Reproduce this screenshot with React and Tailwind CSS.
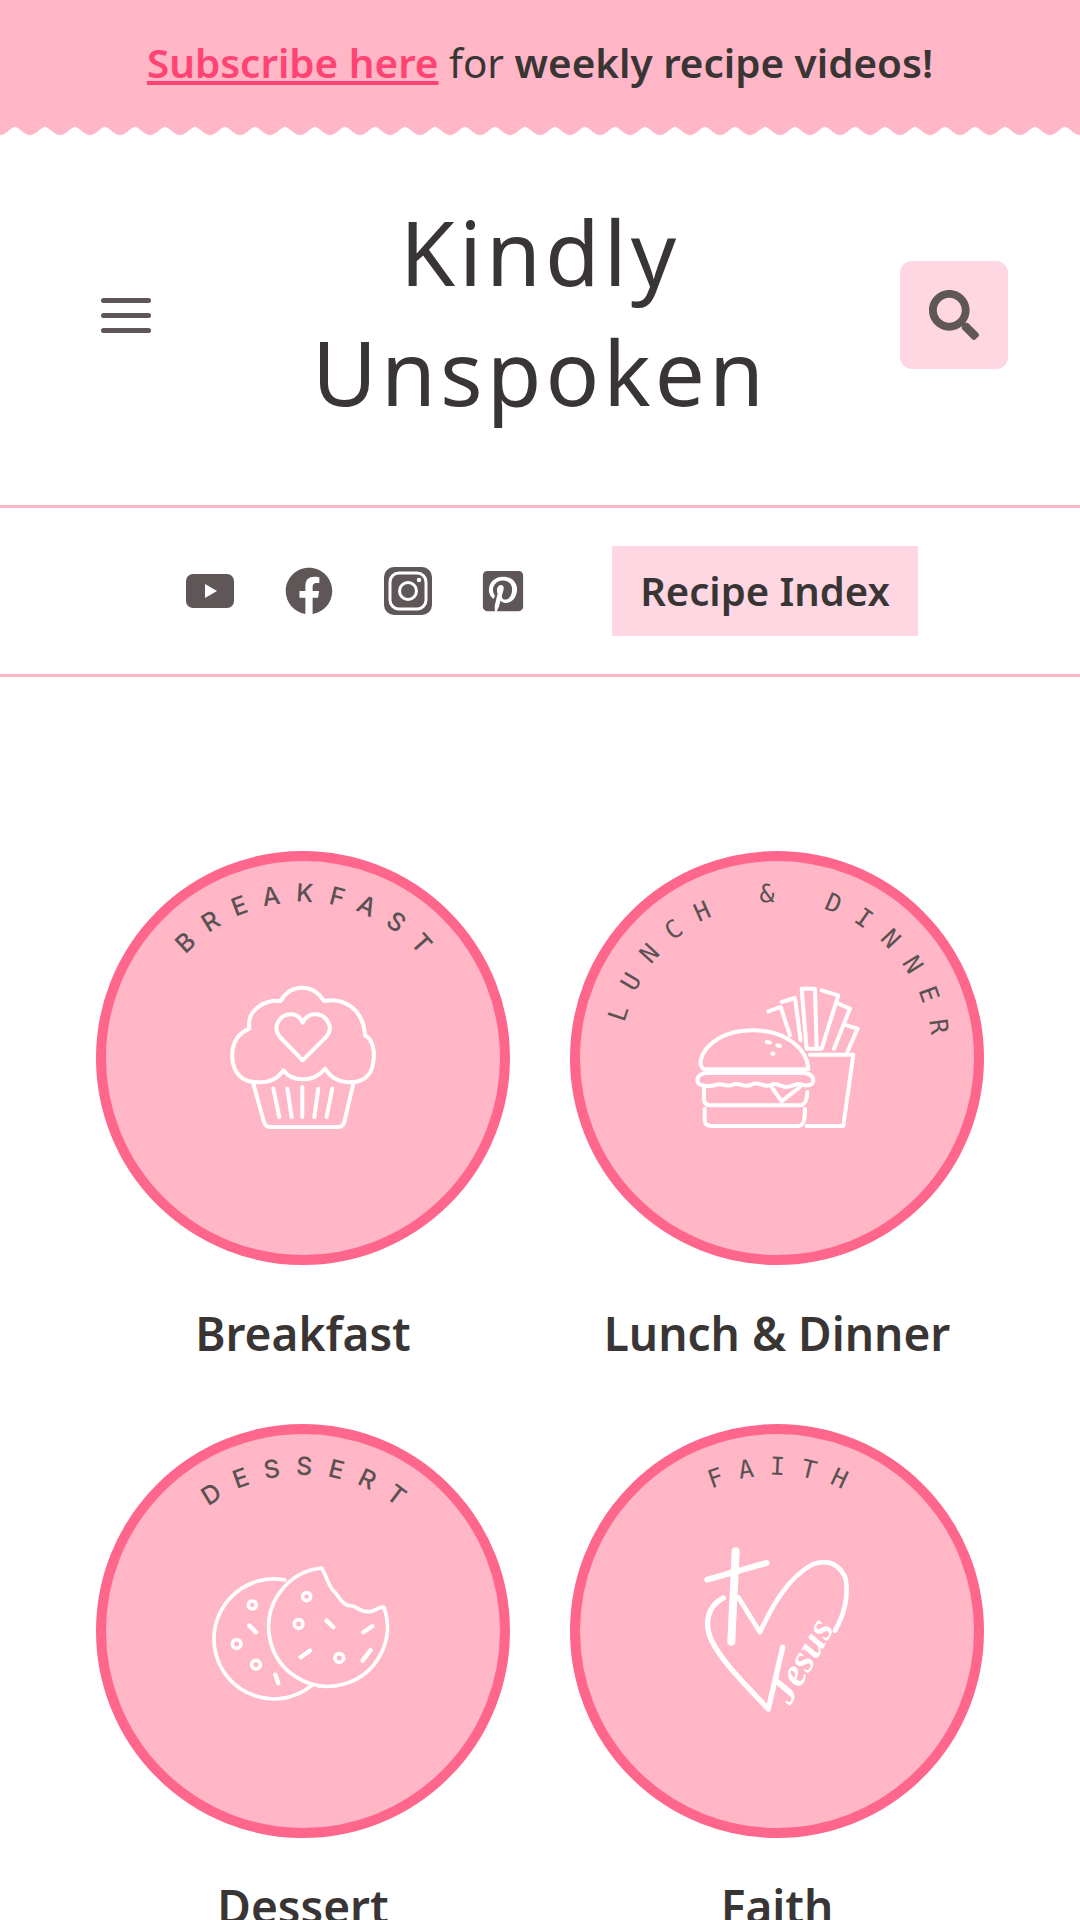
import { FaFacebook, FaPinterestSquare, FaSearch } from "react-icons/fa";

const font = { fontFamily: '"Noto Sans", "Open Sans", sans-serif' };

function Zigzag() {
  let d = "M0 0 L0 8";
  for (let x = 0; x < 1080; x += 30) {
    d += ` C${x + 6} 8 ${x + 11} 0 ${x + 15} 0 C${x + 19} 0 ${x + 24} 8 ${x + 30} 8`;
  }
  d += " L1080 0 Z";
  return (
    <svg className="block w-full h-[8px]" viewBox="0 0 1080 8" preserveAspectRatio="none">
      <path fill="#ffb6c7" d={d} />
    </svg>
  );
}

function Cupcake() {
  return (
    <g transform="translate(-16,-12.33) scale(0.3333)" fill="none" stroke="#fff" strokeWidth="12" strokeLinecap="round" strokeLinejoin="round">
      <path d="M520 730 C470 725 452 680 458 635 C462 600 485 580 508 570 C500 520 545 482 602 487 C620 455 645 447 667 447 C690 447 715 460 732 487 C790 475 850 510 855 590 C880 605 885 640 880 670 C875 710 850 730 815 730 C780 735 750 715 735 690 C715 715 690 722 668 722 C645 722 625 715 610 695 C595 720 565 735 520 730 Z" />
      <path d="M520 735 L552 850 C555 860 560 865 570 865 L775 865 C785 865 790 860 793 850 L820 735" />
      <path d="M580 750 L598 835 M622 750 L635 835 M667 745 L667 835 M715 750 L703 835 M757 750 L740 835" />
      <path d="M668 665 L600 595 C575 565 600 525 635 527 C650 528 662 538 668 552 C675 538 688 528 703 527 C738 525 765 565 738 595 Z" />
    </g>
  );
}

function Burger() {
  return (
    <g transform="translate(-10,-12.33) scale(0.3333)" fill="none" stroke="#fff" strokeWidth="12" strokeLinecap="round" strokeLinejoin="round">
      <path d="M625 518 L662 505 L690 590 M665 490 L705 478 L722 605 M725 450 L765 450 L770 630 L740 630 L725 450 M785 455 L835 470 L785 630 L770 630 M835 495 L870 510 L822 630 M860 560 L893 570 L862 640" />
      <path d="M750 648 L880 648 L850 862 L740 862" />
      <path d="M440 692 C425 692 420 680 422 665 C435 610 500 575 578 575 C650 575 720 605 742 670 L745 692 Z" />
      <path d="M440 703 L730 703 C750 703 760 715 760 725 C760 738 745 745 725 738 C710 730 700 745 680 745 C660 745 650 730 635 738 C615 750 600 730 580 735 C560 750 545 735 525 735 C505 750 490 732 470 738 C450 745 412 745 412 725 C412 712 425 703 440 703 Z" />
      <path d="M432 748 L432 785 C435 795 442 800 450 800 L725 800 C735 795 742 780 742 760" />
      <path d="M635 745 L665 788 L720 745" />
      <path d="M434 810 L434 845 C435 858 445 862 455 862 L715 862 C728 862 735 852 735 810" />
      <path d="M620 610 L630 612 M652 620 L660 622 M637 645 L640 645" />
    </g>
  );
}

function Cookies() {
  return (
    <g transform="translate(-16,-10) scale(0.3333)" fill="none" stroke="#fff" strokeWidth="11" strokeLinecap="round" strokeLinejoin="round">
      <path d="M615 498 A180 180 0 1 0 695 815" />
      <path d="M725 462 A178 178 0 1 0 912 580 C895 575 880 600 860 592 C840 595 825 570 805 575 C785 570 775 545 765 535 C745 520 745 495 725 462 Z" />
      <circle cx="517" cy="573" r="12" />
      <circle cx="470" cy="690" r="13" />
      <circle cx="528" cy="752" r="13" />
      <circle cx="680" cy="548" r="12" />
      <circle cx="656" cy="630" r="13" />
      <circle cx="778" cy="732" r="13" />
      <path d="M508 635 L528 655 M586 782 L595 808 M740 620 L760 640 M850 655 L877 637 M662 730 L690 710 M848 740 L872 708" strokeWidth="13" />
    </g>
  );
}

function Faith() {
  return (
    <g transform="translate(-10,-10) scale(0.3333)">
      <g fill="none" stroke="#fff" strokeLinecap="round" strokeLinejoin="round">
        <path d="M442 497 L620 447" strokeWidth="18" />
        <path d="M527 412 L514 683" strokeWidth="24" />
        <path d="M490 552 C445 575 430 625 455 680 C490 750 560 815 625 885 L668 700" strokeWidth="16" />
        <path d="M535 550 L600 655 C630 590 680 490 760 450 C820 430 860 470 860 520 C860 570 850 605 825 650" strokeWidth="14" />
      </g>
      <text transform="translate(690,875) rotate(-60)" fill="#fff" fontSize="118" fontStyle="italic" fontWeight="700" fontFamily='"Liberation Serif", serif'>Jesus</text>
    </g>
  );
}

function Badge({ id, label, mono, spacing, shift = 0, children }) {
  return (
    <div className="w-[414px] h-[414px] rounded-full bg-[#ffb6c7] border-[10px] border-[#ff668c] relative">
      <svg className="absolute left-[-10px] top-[-10px]" width="414" height="414" viewBox="0 0 414 414">
        <defs>
          <path id={id} d="M51 207 A156 156 0 0 1 363 207" />
        </defs>
        <text
          fill="#5a5252"
          fontSize="25"
          fontWeight="500"
          letterSpacing={spacing}
          fontFamily={mono ? '"DejaVu Sans Mono", monospace' : "Inter, sans-serif"}
        >
          <textPath href={`#${id}`} startOffset={245 + spacing / 2 + shift} textAnchor="middle">{label}</textPath>
        </text>
        {children}
      </svg>
    </div>
  );
}

const categories = [
  { id: "a", name: "Breakfast", label: "BREAKFAST", spacing: 15, art: <Cupcake /> },
  { id: "b", name: "Lunch & Dinner", label: "LUNCH & DINNER", spacing: 17, shift: 6, mono: true, art: <Burger /> },
  { id: "c", name: "Dessert", label: "DESSERT", spacing: 15, art: <Cookies /> },
  { id: "d", name: "Faith", label: "FAITH", spacing: 15, mono: true, art: <Faith /> },
];

export default function App() {
  return (
    <div className="w-[1080px] h-[1920px] overflow-hidden bg-white text-[#3a3535]" style={font}>
      <div className="bg-[#ffb6c7] h-[127px] flex items-center justify-center text-[40.4px]">
        <p>
          <a className="font-semibold text-[#ff4372] underline">Subscribe here</a> for{" "}
          <strong className="font-semibold">weekly recipe videos!</strong>
        </p>
      </div>
      <Zigzag />

      <header className="h-[370px] px-[72px] pb-[10px] flex items-center justify-between">
        <button className="w-[108px] h-[108px] flex flex-col items-center justify-center gap-[10px]">
          <span className="block w-[50px] h-[5px] rounded-full bg-[#5f5757]" />
          <span className="block w-[50px] h-[5px] rounded-full bg-[#5f5757]" />
          <span className="block w-[50px] h-[5px] rounded-full bg-[#5f5757]" />
        </button>
        <h1 className="w-[500px] mb-[7px] text-center text-[89px] leading-[120px] font-normal tracking-[4px]">Kindly Unspoken</h1>
        <button className="w-[108px] h-[108px] rounded-xl bg-[#ffd7e3] flex items-center justify-center text-[#5f5757]">
          <FaSearch size={50} />
        </button>
      </header>

      <nav className="h-[172px] border-y-[3px] border-[#ffb6c7] pl-[186px] flex items-center text-[#5f5757]">
        <div className="flex items-center gap-[51px]">
          <svg width="48" height="34" viewBox="0 0 48 34">
            <rect width="48" height="34" rx="7" fill="currentColor" />
            <polygon points="19,10 19,24 31,17" fill="#fff" />
          </svg>
          <FaFacebook size={48} />
          <svg width="48" height="48" viewBox="0 0 48 48">
            <rect width="48" height="48" rx="10" fill="currentColor" />
            <rect x="6" y="6" width="36" height="36" rx="9" fill="none" stroke="#fff" strokeWidth="3" />
            <circle cx="24" cy="24" r="8.5" fill="none" stroke="#fff" strokeWidth="3" />
            <circle cx="35" cy="13" r="2.2" fill="#fff" />
          </svg>
          <div className="w-[48px] flex justify-start">
            <FaPinterestSquare size={46} className="-ml-[3px]" />
          </div>
        </div>
        <a className="ml-[81px] w-[306px] h-[90px] bg-[#ffd7e3] flex items-center justify-center text-[40px] font-semibold text-[#3a3535]">Recipe Index</a>
      </nav>

      <main className="px-[96px] pt-[174px] grid grid-cols-2 gap-x-[60px] gap-y-[57px]">
        {categories.map((c) => (
          <div key={c.id} className="flex flex-col items-center">
            <Badge id={c.id} label={c.label} mono={c.mono} spacing={c.spacing} shift={c.shift}>
              {c.art}
            </Badge>
            <h2 className="mt-[34px] text-[46px] leading-[68px] font-semibold">{c.name}</h2>
          </div>
        ))}
      </main>
    </div>
  );
}
